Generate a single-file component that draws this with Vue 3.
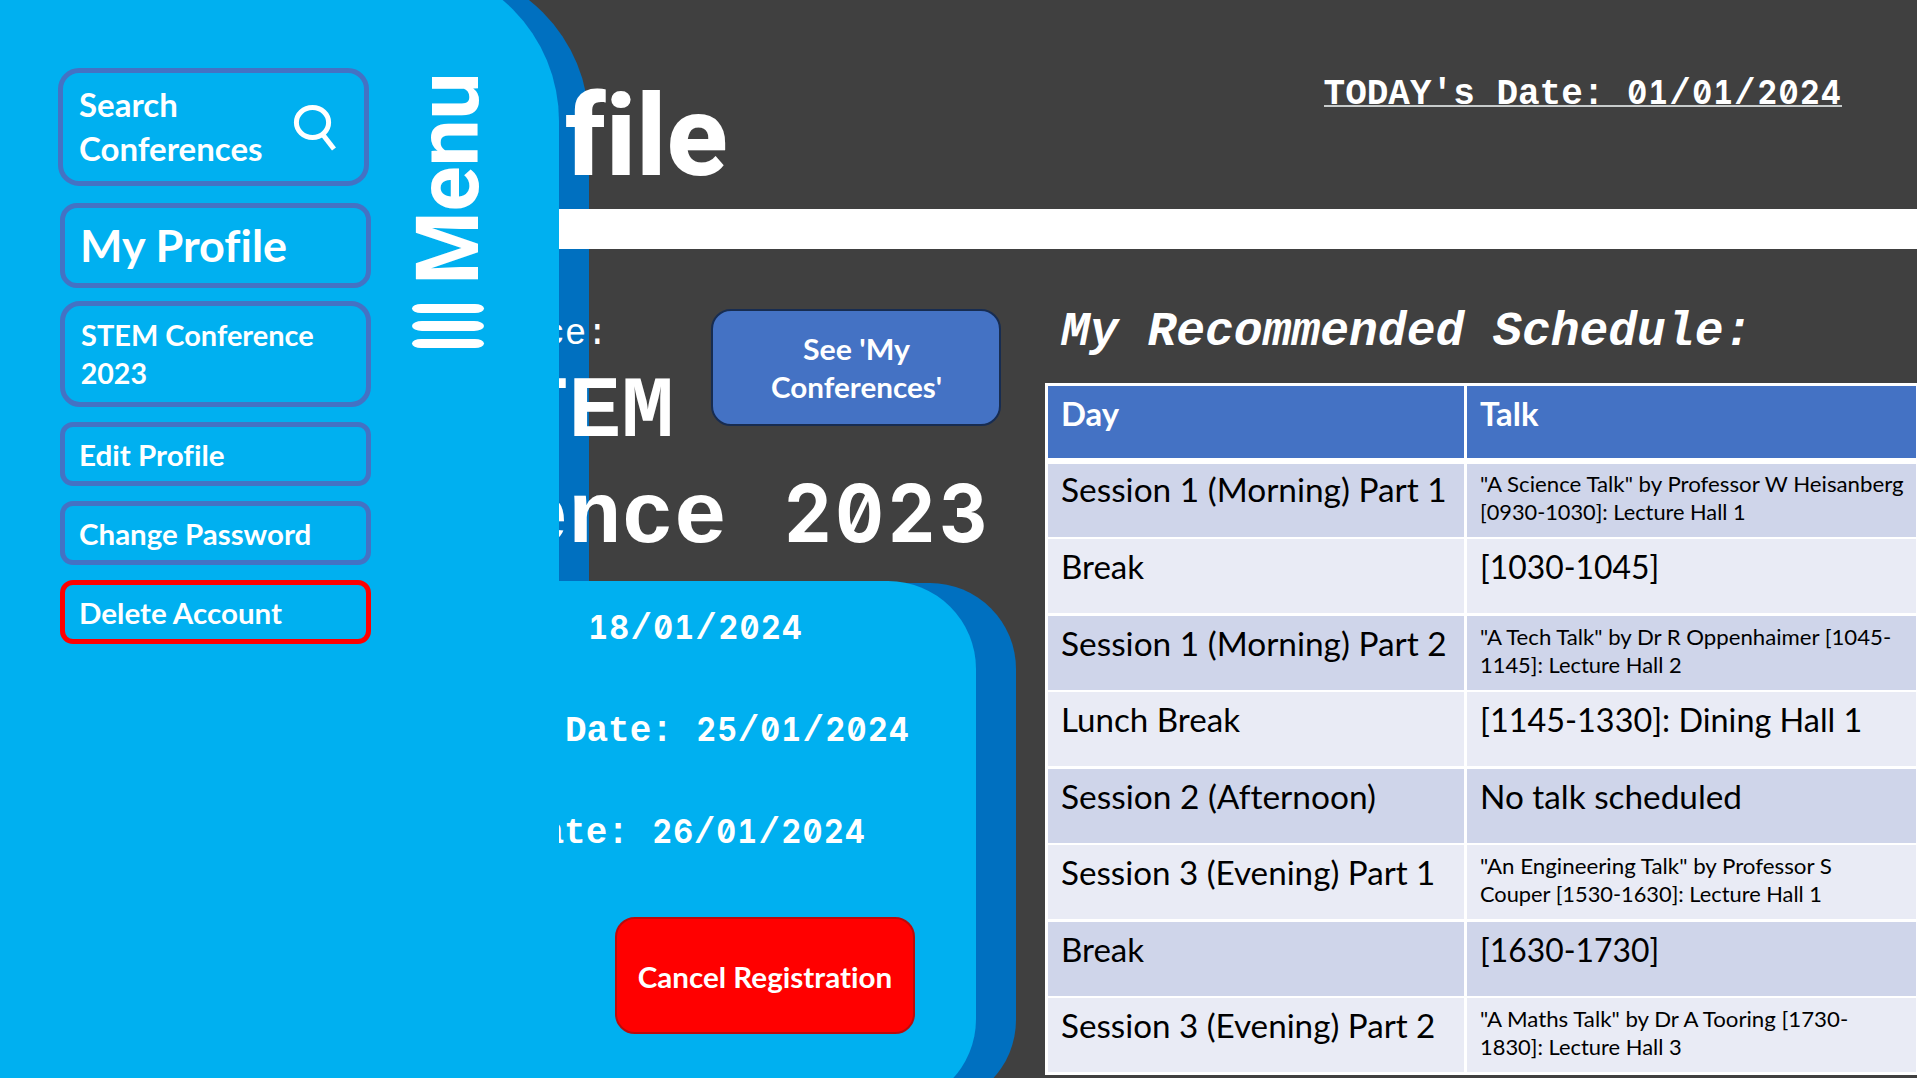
<script setup>
import { h, withDirectives } from 'vue'

// Squeezes or stretches a line of text horizontally to a given width.
const vFit = {
  mounted(el, { value }) {
    el.style.transform = `scaleX(${value / el.offsetWidth})`
  }
}

// Monospaced text whose digit runs use slashed-zero numerals, one 0.6em cell per digit.
const Mono = (props) =>
  h('span', { class: 'mono' }, props.text.split(/(\d+)/).filter(Boolean).map((part) =>
    /\d/.test(part)
      ? h('span', { class: 'num', style: { width: `${part.length * props.cell}px` } }, [
          withDirectives(h('span', { class: 'num-run' }, part), [[vFit, part.length * props.cell]])
        ])
      : part
  ))
Mono.props = ['text', 'cell']

const menuItems = [
  { cls: 'search', lines: [['Search', 99], ['Conferences', 183.5]] },
  { cls: 'current', lines: [['My Profile', 207]] },
  { cls: 'stem', lines: [['STEM Conference', 233], ['2023', 66]] },
  { cls: 'small', lines: [['Edit Profile', 146]] },
  { cls: 'small', lines: [['Change Password', 232]] },
  { cls: 'small danger', lines: [['Delete Account', 202.5]] }
]

const dates = [
  { cls: 'd1', text: ': 18/01/2024' },
  { cls: 'd2', text: 'Date: 25/01/2024' },
  { cls: 'd3', text: 'ate: 26/01/2024' }
]

const rows = [
  { day: ['Session 1 (Morning) Part 1', 386], small: true, talk: [['"A Science Talk" by Professor W Heisanberg', 424], ['[0930-1030]: Lecture Hall 1', 266]] },
  { day: ['Break', 83], talk: [['[1030-1045]', 179.5]] },
  { day: ['Session 1 (Morning) Part 2', 386], small: true, talk: [['"A Tech Talk" by Dr R Oppenhaimer [1045-', 411], ['1145]: Lecture Hall 2', 202]] },
  { day: ['Lunch Break', 179.5], talk: [['[1145-1330]: Dining Hall 1', 382]] },
  { day: ['Session 2 (Afternoon)', 315], talk: [['No talk scheduled', 262]] },
  { day: ['Session 3 (Evening) Part 1', 374], small: true, talk: [['"An Engineering Talk" by Professor S', 352], ['Couper [1530-1630]: Lecture Hall 1', 342]] },
  { day: ['Break', 83], talk: [['[1630-1730]', 179.5]] },
  { day: ['Session 3 (Evening) Part 2', 374], small: true, talk: [['"A Maths Talk" by Dr A Tooring [1730-', 368], ['1830]: Lecture Hall 3', 202]] }
]
</script>

<template>
  <div class="page">
    <div class="menu-shadow"></div>

    <div class="content">
      <header class="top">
        <h1><span v-fit="163" class="fit">file</span></h1>
        <div class="today"><Mono text="TODAY's Date: 01/01/2024" :cell="21.6" /></div>
      </header>
      <div class="bar"></div>

      <div class="body">
        <section class="left">
          <div class="conf-row">
            <div>
              <div class="label">ce:</div>
              <div class="big">TEM</div>
            </div>
            <button class="btn see">
              <span v-fit="107" class="fit">See 'My</span>
              <span v-fit="171" class="fit">Conferences'</span>
            </button>
          </div>
          <div class="big second"><Mono text="ence 2023" :cell="52.8" /></div>

          <div class="card">
            <div class="card-face">
              <div v-for="d in dates" :key="d.cls" class="date" :class="d.cls"><Mono :text="d.text" :cell="21.6" /></div>
              <button class="btn cancel"><span v-fit="254.5" class="fit">Cancel Registration</span></button>
            </div>
          </div>
        </section>

        <section class="right">
          <h2>My Recommended Schedule:</h2>
          <div class="table">
            <div class="tr head">
              <div class="cell day"><span v-fit="58" class="fit">Day</span></div>
              <div class="cell talk"><span v-fit="59" class="fit">Talk</span></div>
            </div>
            <div v-for="(r, i) in rows" :key="i" class="tr" :class="{ alt: i % 2, first: i === 0 }">
              <div class="cell day"><span v-fit="r.day[1]" class="fit">{{ r.day[0] }}</span></div>
              <div class="cell talk" :class="{ tiny: r.small }">
                <span v-for="t in r.talk" :key="t[0]" v-fit="t[1]" class="fit">{{ t[0] }}</span>
              </div>
            </div>
          </div>
        </section>
      </div>
    </div>

    <aside class="menu">
      <div class="menu-fill"></div>
      <nav>
        <button v-for="(m, i) in menuItems" :key="i" class="item" :class="m.cls">
          <span class="item-text">
            <span v-for="l in m.lines" :key="l[0]" v-fit="l[1]" class="fit">{{ l[0] }}</span>
          </span>
          <svg v-if="m.cls === 'search'" class="lens" width="46" height="46" viewBox="0 0 46 46">
            <ellipse cx="20.5" cy="19.5" rx="16.1" ry="15" />
            <path d="M31.5 32.5 L42 46" />
          </svg>
        </button>
      </nav>
      <div class="handle">
        <div class="menu-word">Menu</div>
        <div class="burger"><i></i><i></i><i></i></div>
      </div>
    </aside>
  </div>
</template>

<style>
html, body { margin: 0; overflow: hidden; background: #404040; }
.mono { white-space: pre; }
.mono .num { display: inline-block; line-height: 1; }
.mono .num-run {
  display: inline-block;
  padding-left: 0.05em;
  letter-spacing: 0.05em;
  transform-origin: 0 50%;
  font-family: Inter, sans-serif;
  font-size: 0.91em;
  line-height: 1;
  font-feature-settings: "tnum" 1, "zero" 1;
}
</style>

<style scoped>
* { box-sizing: border-box; }
.page {
  position: relative;
  width: 1917px;
  height: 1078px;
  overflow: hidden;
  background: #404040;
  color: #fff;
  font-family: Lato, "Liberation Sans", sans-serif;
  font-variant-ligatures: none;
}
.fit { display: block; width: max-content; white-space: nowrap; transform-origin: 0 50%; }
button { font-family: inherit; font-variant-ligatures: none; color: inherit; margin: 0; padding: 0; background: none; text-align: left; }

.menu-shadow {
  position: absolute;
  left: 0;
  top: -34px;
  width: 588.5px;
  height: 700px;
  border-top-right-radius: 158px;
  background: #0070c0;
}

.content { position: relative; z-index: 1; }
.top { height: 209px; display: flex; align-items: flex-start; justify-content: space-between; padding-right: 75px; }
h1 {
  margin: 79px 0 0 565px;
  font-family: Roboto, sans-serif;
  font-weight: 800;
  font-size: 113.5px;
  line-height: 116px;
}
.today {
  margin-top: 75.2px;
  height: 31.8px;
  border-bottom: 2px solid #c8cccc;
  font-family: "Liberation Mono", monospace;
  font-weight: 700;
  font-size: 36px;
  line-height: 40px;
}
.bar { height: 39.7px; background: #fff; }
.body { display: flex; }

.left { width: 1045px; flex: none; padding-top: 60.6px; }
.conf-row { display: flex; padding-left: 515.6px; height: 156.6px; }
.label { margin: 4px 0 2.8px 27.6px; font: 400 36px/44px "Liberation Mono", monospace; }
.big { font: 700 88px/106px "Liberation Mono", monospace; white-space: pre; }
.second { padding-left: 515.6px; height: 106px; }
.btn { display: flex; flex-direction: column; align-items: center; justify-content: center; border-radius: 20px; font-size: 28.6px; font-weight: 700; line-height: 38px; }
.btn .fit { transform-origin: 50% 50%; }
.see { width: 289.5px; height: 116.5px; margin-left: 37.3px; background: #4472c4; border: 2px solid #172c51; padding-top: 1px; }

.card { position: relative; z-index: 0; margin-top: 9px; width: 975.7px; height: 526px; }
.card::before {
  content: "";
  position: absolute;
  z-index: -1;
  left: 500px;
  right: -40.3px;
  top: 2.5px;
  bottom: 1px;
  border-radius: 86px;
  background: #0070c0;
}
.card-face { height: 526px; border-radius: 0 88px 88px 0; background: #00b0f0; display: flex; flex-direction: column; gap: 6px; padding-top: 1px; }
.date { font: 700 36px/96px "Liberation Mono", monospace; height: 96px; white-space: pre; }
.d1 { padding-left: 544px; }
.d2 { padding-left: 564.9px; }
.d3 { padding-left: 542.5px; }
.cancel { width: 299.5px; height: 116.5px; margin: 29.5px 0 0 615px; background: #f00; border: 2px solid #bc0a0a; padding-top: 2px; }

.right { flex: 1; padding-top: 53px; }
h2 { margin: 0 0 21.5px 16px; font: italic 700 48px/60px "Liberation Mono", monospace; white-space: pre; }
.table { width: 871.5px; background: #fff; padding: 2.7px 1px 2.5px 2.7px; display: flex; flex-direction: column; gap: 2.5px; }
.tr { display: flex; gap: 2.7px; height: 74px; color: #000; }
.cell { background: #cfd5ea; font-size: 32.3px; line-height: 44px; padding: 6px 0 0 13.3px; }
.cell.talk { padding-left: 12.7px; }
.alt .cell { background: #e9ebf5; }
.day { width: 416.7px; flex: none; }
.talk { flex: 1; min-width: 0; }
.head { height: 72.2px; margin-bottom: 3.5px; color: #fff; font-weight: 700; }
.head .cell { background: #4472c4; }
.first { height: 72.5px; }
.first .cell { padding-top: 4.2px; }
.cell.tiny { font-size: 22px; line-height: 28px; padding-top: 7.2px; }
.first .cell.tiny { padding-top: 5.7px; }

.menu { position: absolute; z-index: 2; inset: 0 auto 0 0; width: 559px; display: flex; align-items: flex-start; overflow: hidden; }
.menu-fill { position: absolute; z-index: -1; inset: -37px 0 0 0; border-top-right-radius: 158px; background: #00b0f0; }
nav { padding: 68px 0 0 60px; width: 371px; display: flex; flex-direction: column; }
.item { width: 310.5px; border: 5px solid #4472c4; display: flex; justify-content: space-between; font-weight: 700; }
.item-text { width: 225px; }
.search { height: 117.7px; margin-left: -2px; border-radius: 21px; font-size: 32px; line-height: 43.5px; padding: 10px 32px 0 16px; }
.lens { flex: none; margin: 19.5px -6px 0 0; overflow: visible; fill: none; stroke: #fff; stroke-width: 5; }
.current { height: 85.5px; margin-top: 17px; border-radius: 17px; font-size: 43px; line-height: 50px; padding: 13px 0 0 15px; }
.stem { height: 106.5px; margin-top: 12.5px; border-radius: 20px; font-size: 28.6px; line-height: 38.3px; padding: 10.5px 0 0 15.7px; }
.small { height: 64px; margin-top: 15px; border-radius: 13px; font-size: 28.6px; line-height: 38px; padding: 8.5px 0 0 14px; }
.danger { border-color: #f00; }

.handle { width: 90px; margin-left: 32px; padding-top: 80px; display: flex; flex-direction: column; align-items: center; }
.menu-word {
  width: 90px;
  height: 213px;
  writing-mode: vertical-rl;
  transform: rotate(180deg) scaleY(0.96);
  transform-origin: 50% 49%;
  font-family: Roboto, sans-serif;
  font-weight: 700;
  font-size: 87px;
  line-height: 90px;
}
.burger { display: flex; flex-direction: column; gap: 8.3px; margin-top: 10.7px; }
.burger i { width: 72.5px; height: 9.3px; border-radius: 10px / 5px; background: #fff; }
</style>
